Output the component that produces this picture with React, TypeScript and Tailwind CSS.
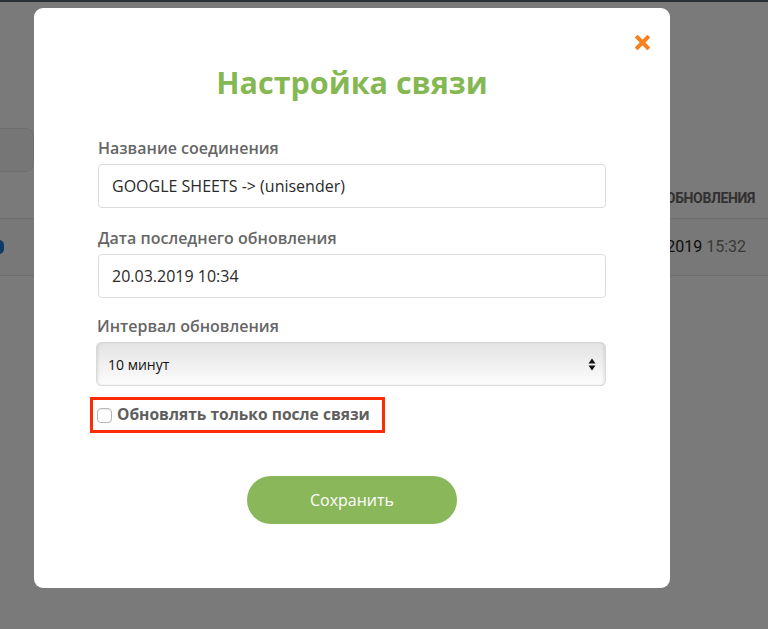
import React from 'react';

const font = { fontFamily: '"Open Sans", "Noto Sans", sans-serif' };

const Field: React.FC<{ label: string; value: string }> = ({ label, value }) => (
  <div className="flex flex-col gap-1">
    <label className="text-[16px] leading-6 font-semibold text-[#666]">{label}</label>
    <div className="h-[44px] flex items-center px-[13px] border border-[#dcdcdc] rounded-[4px] bg-white text-[16px] text-[#2a2a2a]">
      {value}
    </div>
  </div>
);

const App: React.FC = () => {
  return (
    <div className="relative w-full h-[629px] overflow-hidden bg-white" style={font}>
      {/* page behind the modal */}
      <div className="h-[2px] bg-[#5a6470]" />
      <div className="flex flex-col pt-[126px]" style={{ fontFamily: 'Roboto, "Noto Sans", sans-serif' }}>
        <div className="h-[44px] w-[60px] -ml-[26px] rounded-lg bg-[#f6f6f6] border border-[#e9e9e9]" />
        <div className="h-[46px] flex items-end justify-end pr-[13px] pb-[9px] text-[14px] font-bold text-[#666] tracking-tight">
          ДАТА ОБНОВЛЕНИЯ
        </div>
        <div className="h-[58px] flex items-center justify-between border-y border-[#e6e6e6] bg-[#fbfbfb]">
          <span className="-ml-[6px] w-[10px] h-[14px] rounded-full bg-[#1f7ad6]" />
          <span className="pr-[22px] text-[16px] text-[#222]">
            20.03.2019 <span className="text-[#777]">15:32</span>
          </span>
        </div>
      </div>

      {/* overlay */}
      <div className="absolute inset-0 bg-black/[0.52]" />

      {/* modal */}
      <div className="absolute left-[34px] top-[8px] w-[636px] h-[580px] rounded-[9px] bg-white px-16 pt-[52px]">
        <button className="absolute right-[20px] top-[26px] w-[16px] h-[16px] flex items-center justify-center">
          <svg width="15" height="15" viewBox="0 0 15 15">
            <path d="M2.5 2.5 L12.5 12.5 M12.5 2.5 L2.5 12.5" stroke="#f7801f" strokeWidth="4" strokeLinecap="square" />
          </svg>
        </button>

        <h1 className="text-center text-[30.5px] leading-[44px] font-bold text-[#85b853]">Настройка связи</h1>

        <div className="mt-8 flex flex-col">
          <Field label="Название соединения" value="GOOGLE SHEETS -> (unisender)" />
          <div className="mt-[18px]">
            <Field label="Дата последнего обновления" value="20.03.2019 10:34" />
          </div>
          <div className="mt-[16px] flex flex-col gap-1 -ml-[1px]">
            <label className="text-[16px] leading-6 font-semibold text-[#666]">Интервал обновления</label>
            <div className="-ml-[1px] h-[44px] flex items-center justify-between pl-[11px] pr-[9px] border border-[#dadada] rounded-[5px] bg-gradient-to-b from-[#e4e4e4] to-[#fcfcfc] shadow-[inset_2px_0_2px_rgba(0,0,0,0.06),inset_-2px_0_2px_rgba(0,0,0,0.06)] text-[14px] text-[#111]">
              <span>10 минут</span>
              <svg width="8" height="13" viewBox="0 0 8 13">
                <path d="M4 0.5 L7.5 5.5 L0.5 5.5 Z M4 12.5 L7.5 7.5 L0.5 7.5 Z" fill="#111" />
              </svg>
            </div>
          </div>
        </div>

        <div className="mt-[11px] -ml-[8px] w-[295px] h-[36px] border-[3px] border-[#ff2b06] flex items-center pl-[4px] gap-[5px]">
          <span className="w-[15px] h-[15px] rounded-[4px] border border-[#b8b8b8] bg-white shadow-[inset_0_1px_1px_rgba(0,0,0,0.08)]" />
          <span className="text-[15.6px] font-bold text-[#5e5e5e]">Обновлять только после связи</span>
        </div>

        <div className="mt-[43px] flex justify-center">
          <button className="w-[210px] h-[48px] rounded-full bg-[#89b75a] text-white text-[16px]">Сохранить</button>
        </div>
      </div>
    </div>
  );
};

export default App;
